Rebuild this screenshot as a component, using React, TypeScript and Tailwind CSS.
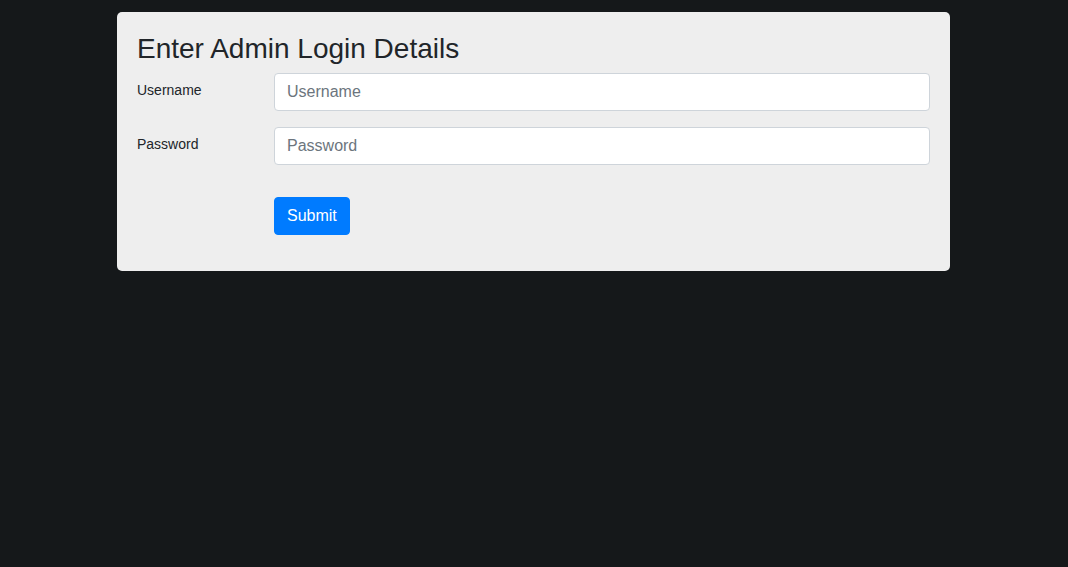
import React from "react";

export default function App() {
  return (
    <div
      className="min-h-[567px] bg-[#15181a] pt-[12px]"
      style={{ fontFamily: '"Liberation Sans", Arial, sans-serif' }}
    >
      <div className="ml-[117px] w-[833px] rounded-[5px] bg-[#eeeeee] px-[20px] pt-[20px] pb-[20px] text-[#212529]">
        <h3 className="mb-[7px] text-[28px] leading-[1.2] font-normal">Enter Admin Login Details</h3>
        <div className="mb-[16px] flex">
          <label className="w-[137px] shrink-0 pt-[7px] text-[14px] leading-[21px]">Username</label>
          <input
            type="text"
            placeholder="Username"
            className="h-[38px] flex-1 rounded-[4px] border border-[#ced4da] bg-white px-[12px] text-[16px] text-[#495057] placeholder:text-[#6c757d] outline-none"
          />
        </div>
        <div className="mb-[16px] flex">
          <label className="w-[137px] shrink-0 pt-[7px] text-[14px] leading-[21px]">Password</label>
          <input
            type="password"
            placeholder="Password"
            className="h-[38px] flex-1 rounded-[4px] border border-[#ced4da] bg-white px-[12px] text-[16px] text-[#495057] placeholder:text-[#6c757d] outline-none"
          />
        </div>
        <div className="mt-[32px] mb-[16px] flex">
          <div className="w-[137px] shrink-0" />
          <button className="h-[38px] rounded-[4px] border border-[#007bff] bg-[#007bff] px-[12px] text-[16px] leading-[24px] text-white">
            Submit
          </button>
        </div>
      </div>
    </div>
  );
}
